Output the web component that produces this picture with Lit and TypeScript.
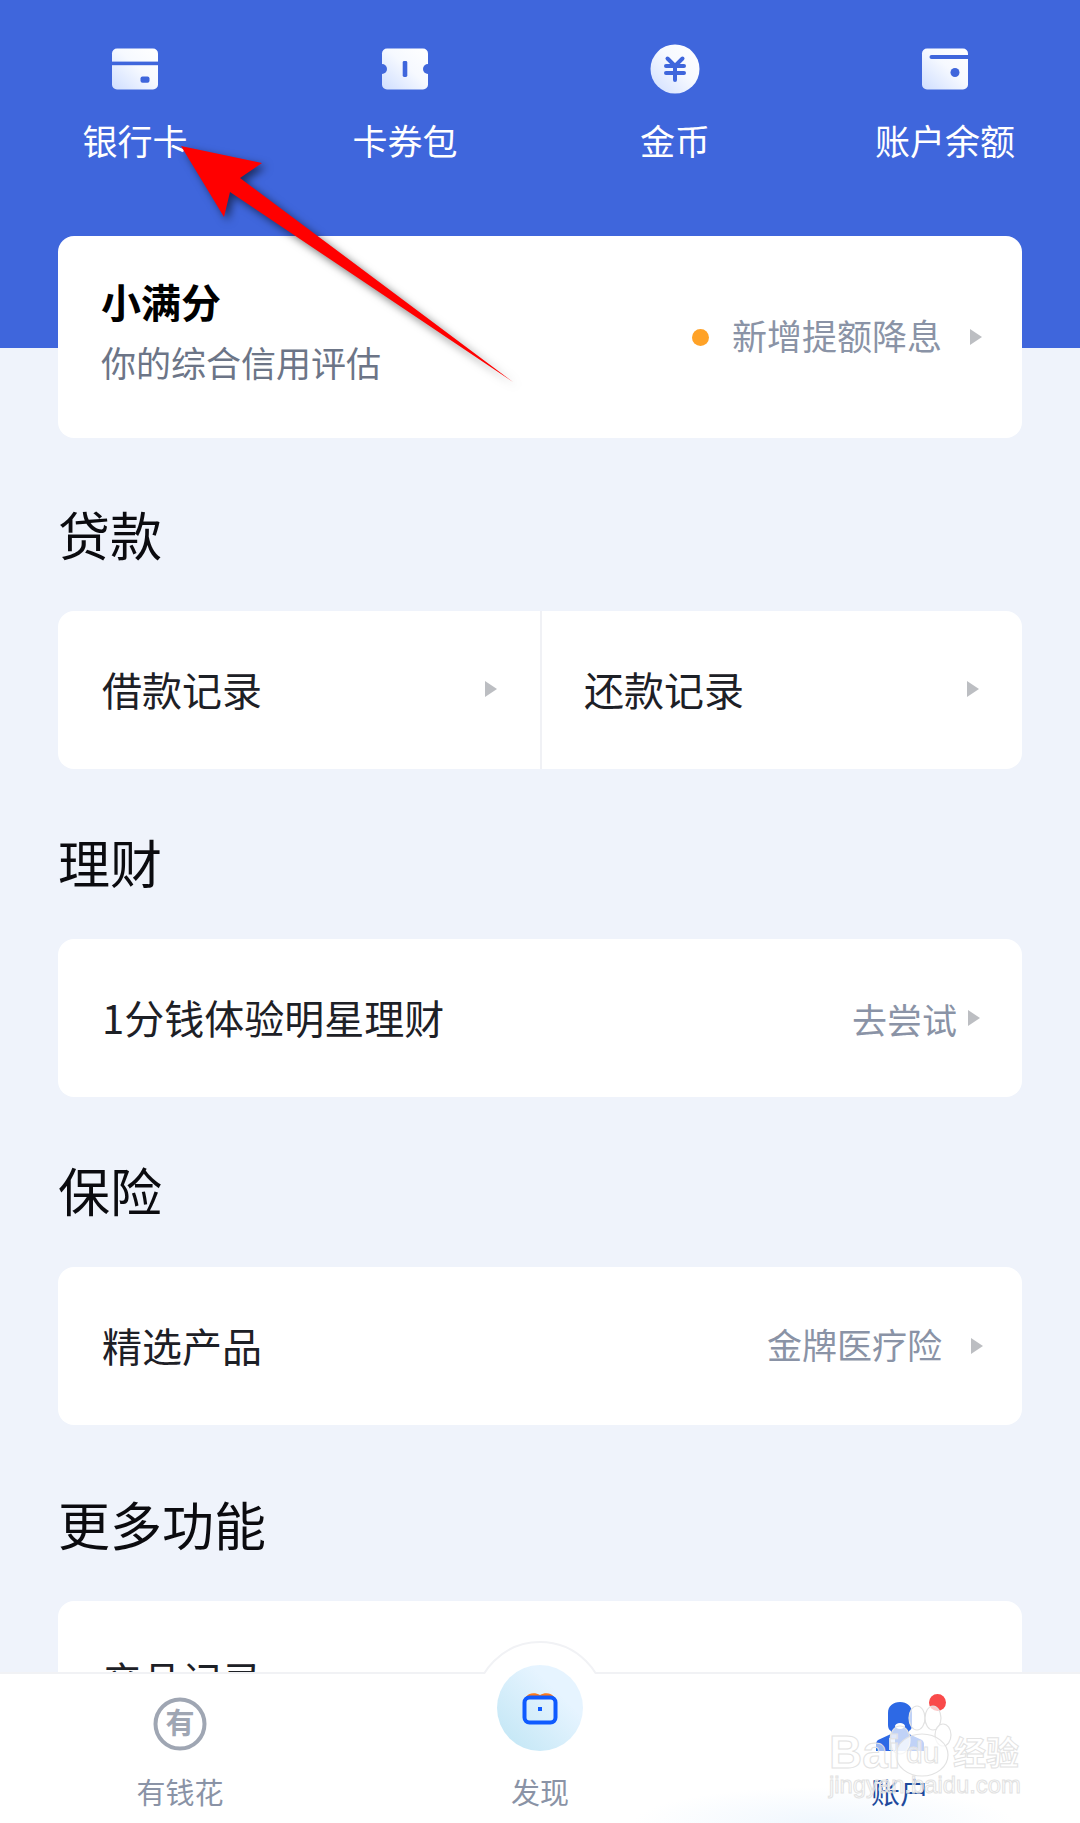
import { LitElement, css, html, svg } from 'lit';
import { customElement } from 'lit/decorators.js';

const BLUE = '#3f66dc';

const defs = (id: string) => svg`
  <defs>
    <linearGradient id=${id} x1="0" y1="1" x2="1" y2="0">
      <stop offset="0" stop-color="#cfdeff" />
      <stop offset="0.55" stop-color="#f6f9ff" />
      <stop offset="1" stop-color="#ffffff" />
    </linearGradient>
  </defs>`;

const shortcuts = [
  {
    label: '银行卡',
    icon: svg`${defs('g1')}
      <rect x="2" y="4.5" width="46" height="41" rx="5" fill="url(#g1)" />
      <rect x="2" y="17.6" width="46" height="3.6" fill=${BLUE} />
      <rect x="30.5" y="32.6" width="9" height="6.2" rx="2" fill=${BLUE} />`,
  },
  {
    label: '卡券包',
    icon: svg`${defs('g2')}
      <rect x="2" y="4.5" width="46" height="41" rx="5" fill="url(#g2)" />
      <circle cx="2" cy="25" r="5" fill=${BLUE} />
      <circle cx="48" cy="25" r="5" fill=${BLUE} />
      <rect x="22.7" y="17" width="4.6" height="16" rx="1.4" fill=${BLUE} />`,
  },
  {
    label: '金币',
    icon: svg`${defs('g3')}
      <circle cx="25" cy="25" r="24.5" fill="url(#g3)" />
      <path d="M17.5 14.5 25 22l7.500-7.500M16 22h18M16 29h18M25 22v14" fill="none" stroke=${BLUE} stroke-width="4" stroke-linecap="round" />`,
  },
  {
    label: '账户余额',
    icon: svg`${defs('g4')}
      <rect x="2" y="4.500" width="46" height="41" rx="5" fill="url(#g4)" />
      <path d="M11.500 13H48" fill="none" stroke=${BLUE} stroke-width="4" stroke-linecap="round" />
      <circle cx="35" cy="28.500" r="4.500" fill=${BLUE} />`,
  },
];

const sections = [
  { title: '贷款', split: ['借款记录', '还款记录'] },
  { title: '理财', label: '1分钱体验明星理财', hint: '去尝试', hintClass: 'near' },
  { title: '保险', label: '精选产品', hint: '金牌医疗险', hintClass: 'far' },
  { title: '更多功能', label: '产品记录', hint: '', hintClass: '' },
];

@customElement('app-root')
export class AppRoot extends LitElement {
  static styles = css`
    :host {
      display: block;
      position: relative;
      width: 1080px;
      height: 1823px;
      overflow: hidden;
      font-family: 'Noto Sans CJK SC', 'Noto Sans', sans-serif;
      background: linear-gradient(#3f66dc 348px, #eff3fb 348px);
    }

    /* shortcuts on the blue header */
    .shortcuts {
      display: grid;
      grid-template-columns: repeat(4, 270px);
      padding-top: 44px;
    }

    .shortcut {
      display: flex;
      flex-direction: column;
      align-items: center;
      color: #fff;
      font-size: 35px;
      line-height: 48px;
    }

    .shortcut svg {
      display: block;
      margin-bottom: 22px;
    }

    .content {
      padding: 72px 58px 0;
    }

    .card {
      background: #fff;
      border-radius: 16px;
    }

    /* score card */
    .score {
      display: flex;
      align-items: center;
      justify-content: space-between;
      height: 202px;
      padding: 0 40px 0 43px;
    }

    .score_left {
      margin-bottom: 12px;
    }

    .score_title {
      font-size: 40px;
      font-weight: 700;
      line-height: 50px;
      color: #000;
    }

    .score_sub {
      font-size: 35px;
      line-height: 50px;
      margin-top: 11px;
      color: #6c7587;
    }

    .score_right {
      display: flex;
      align-items: center;
      font-size: 35px;
      color: #8a93a6;
    }

    .score_right .text {
      margin-bottom: 5px;
    }

    .dot {
      width: 17px;
      height: 17px;
      border-radius: 50%;
      background: #ffa227;
      margin-right: 23px;
    }

    .caret {
      width: 0;
      height: 0;
      border-left: 12px solid #bcbec2;
      border-top: 8.500px solid transparent;
      border-bottom: 8.500px solid transparent;
    }

    .score_right .caret {
      margin-left: 28px;
    }

    /* sections */
    .section {
      margin-top: 57px;
    }

    .section:nth-of-type(1) {
      margin-top: 60px;
    }

    .section:last-of-type {
      margin-top: 63px;
    }

    .section_title {
      margin: 0 0 41px;
      font-size: 52px;
      font-weight: 400;
      line-height: 72px;
      color: #0b0b0f;
    }

    .row {
      display: flex;
      align-items: center;
      justify-content: space-between;
      height: 158px;
      padding: 0 39px 0 44px;
      font-size: 40px;
      color: #1d2026;
    }

    .row_label {
      margin-bottom: 2px;
    }

    .row > .caret {
      margin-bottom: 2px;
    }

    .row_hint {
      display: flex;
      align-items: center;
      font-size: 35px;
      color: #8a93a6;
    }

    .row_hint .caret {
      margin-left: 29px;
    }

    .row_hint.near .caret {
      margin-left: 11px;
      margin-right: 3px;
    }

    .row_hint.far .text {
      margin-bottom: 6px;
    }

    .split {
      display: grid;
      grid-template-columns: 1fr 1fr;
    }

    .split .row {
      padding-right: 43px;
    }

    .split .row + .row {
      border-left: 2px solid #f0f1f5;
      padding-left: 42px;
    }

    /* bottom tab bar */
    .tabs {
      position: absolute;
      left: 0;
      right: 0;
      bottom: 0;
      display: grid;
      grid-template-columns: repeat(3, 360px);
      height: 149px;
      padding-top: 0;
      border-top: 2px solid #f1f2f5;
      background:
        radial-gradient(ellipse 190px 36px at 824px 100%, #f0f7fe, rgba(255, 255, 255, 0)),
        #fff;
    }

    .bump {
      position: absolute;
      top: -33px;
      left: 474px;
      width: 132px;
      height: 33px;
      overflow: hidden;
    }

    .bump::before {
      content: '';
      position: absolute;
      top: 0;
      left: 0;
      width: 128px;
      height: 128px;
      border: 2px solid #f1f2f5;
      border-radius: 50%;
      background: #fff;
    }

    .tab {
      display: flex;
      flex-direction: column;
      align-items: center;
      padding-top: 23px;
      font-size: 29px;
      line-height: 40px;
      color: #8a93a6;
    }

    .tab.active {
      color: #1f4a9c;
    }

    .tab_icon {
      position: relative;
      display: flex;
      align-items: flex-end;
      justify-content: center;
      height: 54px;
      margin-bottom: 20px;
    }

    .found {
      display: flex;
      align-items: center;
      justify-content: center;
      flex: none;
      width: 86px;
      height: 86px;
      border-radius: 50%;
      background: linear-gradient(45deg, #bfe5f4, #e6f4ff 70%);
    }

    .badge {
      position: absolute;
      top: -3px;
      left: 54px;
      width: 17px;
      height: 17px;
      border-radius: 50%;
      background: #f94a4a;
    }

    .money_char {
      font-size: 29px;
      font-weight: 700;
      fill: #9fa6b3;
      font-family: 'Noto Sans CJK SC', sans-serif;
    }

    /* overlays: watermark and the annotation arrow */
    .watermark {
      position: absolute;
      left: 820px;
      top: 1695px;
    }

    .watermark text {
      fill: rgba(255, 255, 255, 0.55);
      stroke: #e2e2e2;
      stroke-width: 1px;
      font-family: 'Liberation Sans', sans-serif;
    }

    .watermark .cn {
      font-family: 'Noto Sans CJK SC', sans-serif;
    }

    .arrow {
      position: absolute;
      left: 170px;
      top: 140px;
      filter: drop-shadow(4px 4px 4px rgba(0, 0, 0, 0.55));
    }
  `;

  renderSection(s: (typeof sections)[number]) {
    return html`
      <section class="section">
        <h2 class="section_title">${s.title}</h2>
        ${s.split
          ? html`<div class="card split">
              ${s.split.map(
                (t) => html`<div class="row"><span class="row_label">${t}</span><span class="caret"></span></div>`,
              )}
            </div>`
          : html`<div class="card row">
              <span class="row_label">${s.label}</span>
              <span class="row_hint ${s.hintClass}"><span class="text">${s.hint}</span><span class="caret"></span></span>
            </div>`}
      </section>
    `;
  }

  render() {
    return html`
      <div class="shortcuts">
        ${shortcuts.map(
          (s) => html`<div class="shortcut">
            <svg width="50" height="50" viewBox="0 0 50 50">${s.icon}</svg>
            ${s.label}
          </div>`,
        )}
      </div>

      <div class="content">
        <div class="card score">
          <div class="score_left">
            <div class="score_title">小满分</div>
            <div class="score_sub">你的综合信用评估</div>
          </div>
          <div class="score_right">
            <span class="dot"></span><span class="text">新增提额降息</span><span class="caret"></span>
          </div>
        </div>
        ${sections.map((s) => this.renderSection(s))}
      </div>

      <nav class="tabs">
        <div class="bump"></div>
        <div class="tab">
          <div class="tab_icon">
            <svg width="54" height="54" viewBox="0 0 54 54">
              <circle cx="27" cy="27" r="24.500" fill="none" stroke="#9fa6b3" stroke-width="4" />
              <text class="money_char" x="27" y="37" text-anchor="middle">有</text>
            </svg>
          </div>
          有钱花
        </div>
        <div class="tab">
          <div class="tab_icon">
            <div class="found">
              <svg width="36" height="36" viewBox="0 0 36 36">
                <path d="M4 7c2-4 9-5 14-2 5-3 12-2 14 2z" fill="#ff7a1a" />
                <rect x="2.500" y="7.500" width="31" height="25" rx="5" fill="none" stroke="#0f5bff" stroke-width="4" />
                <rect x="16" y="17" width="4" height="4" fill="#0f5bff" />
              </svg>
            </div>
          </div>
          发现
        </div>
        <div class="tab active">
          <div class="tab_icon">
            <svg width="50" height="50" viewBox="0 0 50 50">
              <path
                d="M13 12C13 5 18 1 25 1s12 4 12 11v12c0 3-1 5-3 6v3l13 6c1 1 2 2 2 4v7H1v-7c0-2 1-3 2-4l13-6v-3c-2-1-3-3-3-6z"
                fill="#2d69e5"
              />
              <ellipse cx="25" cy="25" rx="5" ry="3" fill="#fff" />
              <rect x="14" y="37" width="6" height="12" fill="#cfe0fb" />
            </svg>
            <span class="badge"></span>
          </div>
          账户
        </div>
      </nav>

      <svg class="watermark" width="210" height="110" viewBox="0 0 210 110">
        <ellipse cx="80" cy="45" rx="10" ry="14" fill="rgba(255,255,255,.7)" stroke="#e2e2e2" stroke-width="1.200" />
        <ellipse cx="97" cy="23" rx="8" ry="12" fill="rgba(255,255,255,.7)" stroke="#e2e2e2" stroke-width="1.200" />
        <ellipse cx="113" cy="23" rx="8" ry="12" fill="rgba(255,255,255,.7)" stroke="#e2e2e2" stroke-width="1.200" />
        <ellipse cx="123" cy="40" rx="8" ry="11" fill="rgba(255,255,255,.7)" stroke="#e2e2e2" stroke-width="1.200" />
        <ellipse cx="102" cy="60" rx="26" ry="21" fill="rgba(255,255,255,.7)" stroke="#e2e2e2" stroke-width="1.200" />
        <text x="9" y="73" font-size="46" font-weight="700">Bai</text>
        <text x="86" y="68" font-size="30">du</text>
        <text class="cn" x="133" y="70" font-size="33" font-weight="700">经验</text>
        <text x="9" y="98" font-size="23.800">jingyan.baidu.com</text>
      </svg>

      <svg class="arrow" width="360" height="250" viewBox="0 0 360 250">
        <polygon points="11,6 92,23 70,38 343,242 60,52 54,77" fill="#ff0000" />
      </svg>
    `;
  }
}
